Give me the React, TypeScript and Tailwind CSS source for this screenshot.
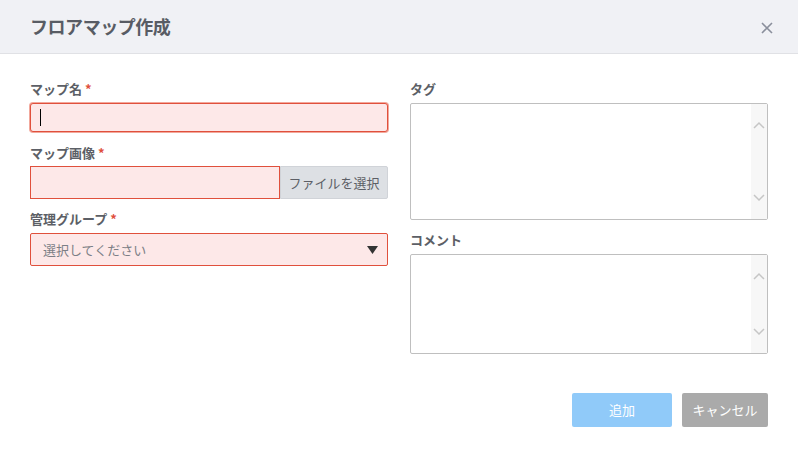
import React from "react";

const font = { fontFamily: '"Noto Sans CJK JP", "Noto Sans", sans-serif' };

function Label({ text, required }: { text: string; required?: boolean }) {
  return (
    <div className="h-[22px] flex items-center text-[13px] font-bold text-[#5c5f66] leading-none">
      {text}
      {required && <span className="ml-[3px] text-[#e0503c]">*</span>}
    </div>
  );
}

function ScrollArea({ h }: { h: string }) {
  return (
    <div className={`${h} flex border border-[#bfbfbf] rounded-[2px] bg-white`}>
      <div className="flex-1" />
      <div className="w-[16px] bg-[#f7f7f7] flex flex-col items-center justify-between py-[17px]">
        <svg width="12" height="8" viewBox="0 0 12 8">
          <path d="M1 7 L6 2 L11 7" fill="none" stroke="#c6c6c6" strokeWidth="1.5" />
        </svg>
        <svg width="12" height="8" viewBox="0 0 12 8">
          <path d="M1 1 L6 6 L11 1" fill="none" stroke="#c6c6c6" strokeWidth="1.5" />
        </svg>
      </div>
    </div>
  );
}

export default function App() {
  return (
    <div className="w-[798px] h-[450px] bg-white" style={font}>
      <div className="h-[54px] bg-[#f0f1f5] border-b border-[#e0e1e5] flex items-center justify-between pl-[30px] pr-[24px]">
        <h1 className="text-[18px] font-bold text-[#585c64] tracking-tight">フロアマップ作成</h1>
        <svg width="14" height="14" viewBox="0 0 14 14" className="mt-[2px]">
          <path d="M2 2 L12 12 M12 2 L2 12" stroke="#8a8f9c" strokeWidth="1.6" />
        </svg>
      </div>
      <div className="px-[30px] pt-[23px] grid grid-cols-2 gap-x-[22px]">
        <div className="flex flex-col">
          <Label text="マップ名" required />
          <div className="mt-[4px] h-[29px] rounded-[3px] border border-[#e0503c] bg-[#fde8e8] ring-1 ring-[#f2a89c] flex items-center pl-[9px]">
            <div className="w-px h-[17px] bg-black" />
          </div>
          <div className="mt-[9px]">
            <Label text="マップ画像" required />
          </div>
          <div className="mt-[3px] h-[33px] flex">
            <div className="flex-1 border border-[#e0503c] bg-[#fde8e8]" />
            <div className="w-[108px] bg-[#dde0e4] border border-[#d0d3d8] rounded-r-[2px] flex items-center justify-center text-[13px] text-[#5c5f66]">
              ファイルを選択
            </div>
          </div>
          <div className="mt-[8px]">
            <Label text="管理グループ" required />
          </div>
          <div className="mt-[4px] h-[33px] rounded-[2px] border border-[#e0503c] bg-[#fde8e8] flex items-center justify-between pl-[12px] pr-[9px]">
            <span className="text-[13px] text-[#7c7f86]">選択してください</span>
            <svg width="11" height="8" viewBox="0 0 11 8">
              <path d="M0 0 L11 0 L5.5 8 Z" fill="#333" />
            </svg>
          </div>
        </div>
        <div className="flex flex-col">
          <Label text="タグ" />
          <div className="mt-[4px]">
            <ScrollArea h="h-[117px]" />
          </div>
          <div className="mt-[8px]">
            <Label text="コメント" />
          </div>
          <div className="mt-[4px]">
            <ScrollArea h="h-[100px]" />
          </div>
        </div>
      </div>
      <div className="flex justify-end gap-[10px] pr-[30px] mt-[39px]">
        <button className="w-[100px] h-[34px] rounded-[2px] bg-[#90caf9] text-white text-[13px]">追加</button>
        <button className="w-[86px] h-[34px] rounded-[2px] bg-[#aaaaaa] text-white text-[13px]">キャンセル</button>
      </div>
    </div>
  );
}
